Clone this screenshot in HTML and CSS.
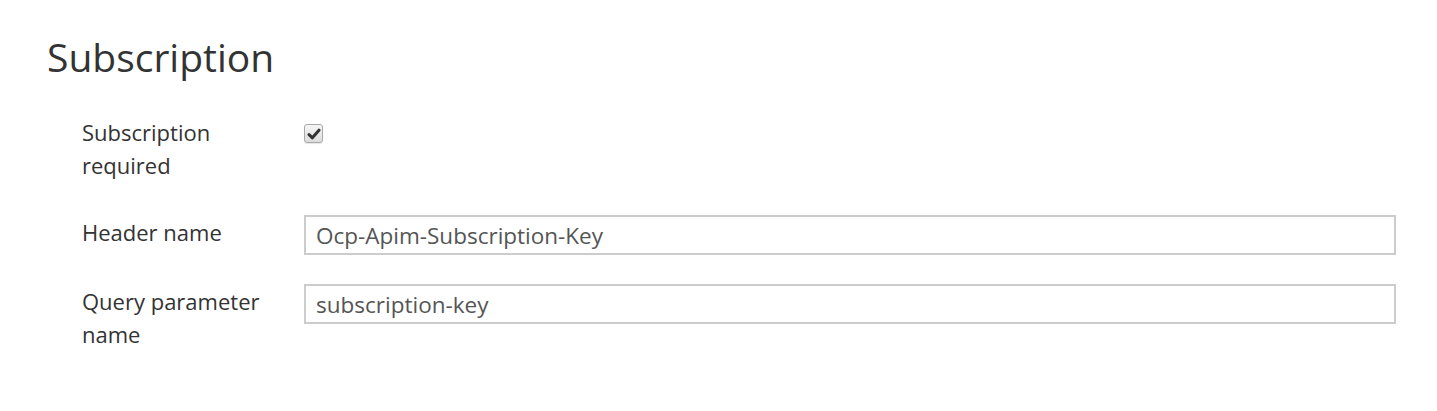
FILE: index.html
```html
<!DOCTYPE html>
<html lang="en">
<head>
<meta charset="utf-8">
<title>Subscription</title>
<link rel="stylesheet" href="styles.css">
</head>
<body>
<div class="page">
  <h1 class="title">Subscription</h1>
  <div class="form">
    <div class="row row-check">
      <label class="label">Subscription required</label>
      <div class="field">
        <span class="checkbox" role="checkbox" aria-checked="true">
          <svg viewBox="0 0 14 14" width="14" height="14"><path d="M2 7.6 L5.4 10.8 L12 3.2" fill="none" stroke="#333" stroke-width="3" stroke-linejoin="round" stroke-linecap="round"/></svg>
        </span>
      </div>
    </div>
    <div class="row row-input">
      <label class="label">Header name</label>
      <div class="field"><input class="text-input" type="text" value="Ocp-Apim-Subscription-Key"></div>
    </div>
    <div class="row row-input">
      <label class="label">Query parameter name</label>
      <div class="field"><input class="text-input" type="text" value="subscription-key"></div>
    </div>
  </div>
</div>
</body>
</html>
```

FILE: styles.css
```css
html, body {
  margin: 0;
  padding: 0;
  background: #ffffff;
}

body {
  font-family: "Open Sans", "Noto Sans", "Liberation Sans", sans-serif;
  color: #333333;
}

.page {
  padding: 31px 41px 0 47px;
}

.title {
  margin: 0;
  font-size: 39px;
  font-weight: 400;
  line-height: 52px;
  color: #333333;
}

.form {
  margin-top: 32px;
  padding-left: 35px;
}

.row {
  display: flex;
  align-items: flex-start;
}

.label {
  width: 222px;
  flex: 0 0 222px;
  padding-right: 20px;
  box-sizing: border-box;
  font-size: 22px;
  line-height: 33px;
  color: #333333;
}

.field {
  flex: 1 1 auto;
}

.row-check {
  margin-bottom: 33px;
}

.row-check .label {
  padding-top: 1px;
}

.row-check .field {
  padding-top: 9px;
}

.checkbox {
  display: flex;
  align-items: center;
  justify-content: center;
  width: 17px;
  height: 17px;
  border: 1px solid #a9a9a9;
  border-radius: 3px;
  background: linear-gradient(#f6f6f6, #dcdcdc);
  box-shadow: 0 1px 1px rgba(0, 0, 0, 0.1);
}

.row-input {
  margin-bottom: 29px;
}

.row-input .label {
  padding-top: 1px;
}

.text-input {
  display: block;
  width: 100%;
  height: 40px;
  box-sizing: border-box;
  border: 2px solid #cccccc;
  border-radius: 0;
  padding: 0 10px;
  font-family: "Open Sans", "Noto Sans", "Liberation Sans", sans-serif;
  font-size: 22.5px;
  color: #555555;
  background: #ffffff;
  outline: none;
}
```
